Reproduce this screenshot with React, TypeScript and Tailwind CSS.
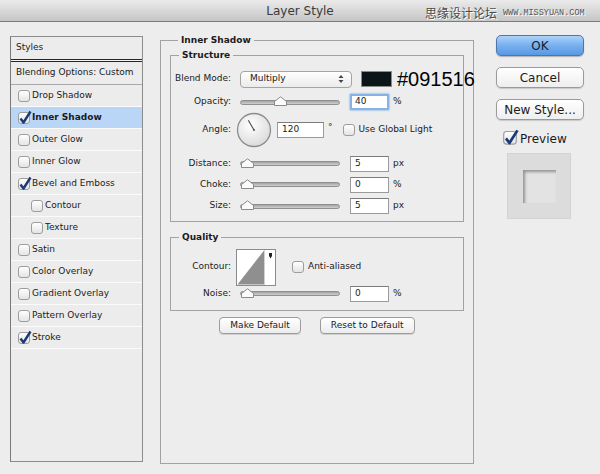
import React from "react";

function Check({ checked = false }: { checked?: boolean }) {
  return (
    <span className="relative inline-block w-[12px] h-[12px] shrink-0 rounded-[3px] border border-[#9d9d9d] bg-linear-to-b from-white to-[#e4e4e4]">
      {checked && (
        <svg
          className="absolute left-[-1px] top-[-3px]"
          width="15"
          height="15"
          viewBox="0 0 15 15"
        >
          <path
            d="M2.5 8.5 L5.5 12.5 L12.5 1.5"
            fill="none"
            stroke="#1d3a78"
            strokeWidth="2.4"
            strokeLinejoin="round"
          />
        </svg>
      )}
    </span>
  );
}

function Slider({ pos }: { pos: number }) {
  return (
    <div className="relative w-[100px] h-[12px] flex items-center shrink-0">
      <div className="w-full h-[5px] rounded-full border border-[#8f8f8f] bg-linear-to-b from-[#a3a3a3] to-[#cfcfcf]" />
      <svg
        className="absolute top-[0px]"
        style={{ left: pos }}
        width="13"
        height="10"
        viewBox="0 0 13 10"
      >
        <path
          d="M0.5 9.5 V5.5 L6.5 0.8 L12.5 5.5 V9.5 Z"
          fill="#fbfbfb"
          stroke="#8a8a8a"
        />
      </svg>
    </div>
  );
}

function NumBox({ value, focus = false, w = "w-[39px]" }: { value: string; focus?: boolean; w?: string }) {
  return (
    <div
      className={
        focus
          ? `${w} h-[16px] shrink-0 bg-white border-2 border-[#86b2e6] shadow-[0_0_2px_#5b95d8] flex items-center pl-[3px] text-[9px]`
          : `${w} h-[16px] shrink-0 bg-white border border-[#9a9a9a] border-t-[#7c7c7c] flex items-center pl-[4px] text-[9px]`
      }
    >
      {value}
    </div>
  );
}

function Label({ children }: { children: React.ReactNode }) {
  return <div className="w-[61px] shrink-0 text-right pr-[1px] text-[9px]">{children}</div>;
}

function SliderRow({ label, pos, value, unit, h = "h-[22px]" }: { label: string; pos: number; value: string; unit: string; h?: string }) {
  return (
    <div className={`flex items-center ${h}`}>
      <Label>{label}</Label>
      <div className="ml-[8px]">
        <Slider pos={pos} />
      </div>
      <div className="ml-[10px]">
        <NumBox value={value} />
      </div>
      <span className="ml-[4px] text-[9px]">{unit}</span>
    </div>
  );
}

function TitleBar() {
  return (
    <div className="relative h-[22px] bg-linear-to-b from-[#ebebeb] to-[#c6c6c6] border-b border-[#7b7b7b] flex items-center justify-center">
      <span className="text-[12px] text-[#3a3a3a] leading-none">Layer Style</span>
      {/* watermark */}
      <div className="absolute left-[425px] top-[7px] flex items-center">
        <span className="font-['Noto_Sans_CJK_SC',sans-serif] text-[12px] leading-none text-[#4a4a4a] [text-shadow:1px_1px_0_#fff]">
          思缘设计论坛
        </span>
        <span className="ml-[6px] font-['Liberation_Mono',monospace] text-[8.5px] leading-none text-[#555] [text-shadow:1px_1px_0_#fff]">
          WWW.MISSYUAN.COM
        </span>
      </div>
    </div>
  );
}

const items: { name: string; checked?: boolean; sub?: boolean; active?: boolean }[] = [
  { name: "Drop Shadow" },
  { name: "Inner Shadow", checked: true, active: true },
  { name: "Outer Glow" },
  { name: "Inner Glow" },
  { name: "Bevel and Emboss", checked: true },
  { name: "Contour", sub: true },
  { name: "Texture", sub: true },
  { name: "Satin" },
  { name: "Color Overlay" },
  { name: "Gradient Overlay" },
  { name: "Pattern Overlay" },
  { name: "Stroke", checked: true },
];

function StyleList() {
  return (
    <div className="w-[133px] h-[426px] shrink-0 border border-[#8c8c8c] border-l-[#7a7a7a] bg-[#ececec] text-[9px]">
      <div className="h-[22px] flex items-center pl-[5px]">Styles</div>
      <div className="h-[3px] border-y border-[#262626] bg-[#f4f4f4]" />
      <div className="h-[23px] flex items-center pl-[5px] border-b border-[#a9a9a9]">
        Blending Options: Custom
      </div>
      {items.map((it) => (
        <div
          key={it.name}
          className={`h-[22px] flex items-center border-b border-[#fbfbfb] ${it.sub ? "pl-[20px]" : "pl-[7px]"} ${it.active ? "bg-[#b9d6f7] font-bold" : ""}`}
        >
          <Check checked={it.checked} />
          <span className="ml-[2px]">{it.name}</span>
        </div>
      ))}
    </div>
  );
}

function Dial() {
  return (
    <svg width="36" height="36" viewBox="0 0 36 36" className="shrink-0">
      <defs>
        <radialGradient id="dialg" cx="40%" cy="35%" r="70%">
          <stop offset="0%" stopColor="#ffffff" />
          <stop offset="100%" stopColor="#d9d9d9" />
        </radialGradient>
      </defs>
      <circle cx="18" cy="18" r="16.5" fill="url(#dialg)" stroke="#8c8c8c" strokeWidth="1.3" />
      <line x1="18" y1="18" x2="12.3" y2="8.2" stroke="#555" strokeWidth="1.2" />
      <circle cx="18" cy="18" r="1" fill="#555" />
    </svg>
  );
}

function ContourThumb() {
  return (
    <svg width="40" height="37" viewBox="0 0 40 37" className="shrink-0">
      <rect x="0.5" y="0.5" width="39" height="36" fill="#fff" stroke="#8c8c8c" />
      <polygon points="1.5,35.5 28,1.5 28,35.5" fill="#8f8f8f" />
      <line x1="28.5" y1="1" x2="28.5" y2="36" stroke="#d2d2d2" />
      <path d="M33 4 H36 V7 L34.5 9.5 L33 7 Z" fill="#222" />
    </svg>
  );
}

function Fieldset({
  legend,
  className,
  children,
}: {
  legend: string;
  className?: string;
  children: React.ReactNode;
}) {
  return (
    <fieldset className={`min-w-0 border border-[#a2a2a2] ${className ?? ""}`}>
      <legend className="ml-[8px] px-[3px] text-[9px] font-bold leading-[14px]">{legend}</legend>
      {children}
    </fieldset>
  );
}

function SmallButton({ children }: { children: React.ReactNode }) {
  return (
    <div className="h-[17px] px-[10px] rounded-[4px] border border-[#9b9b9b] bg-linear-to-b from-white to-[#ececec] shadow-[0_1px_0_#d0d0d0] flex items-center text-[9px]">
      {children}
    </div>
  );
}

function BigButton({ children, primary = false }: { children: React.ReactNode; primary?: boolean }) {
  return (
    <div
      className={
        primary
          ? "w-[88px] h-[21px] rounded-[5px] border border-[#4d74ad] bg-linear-to-b from-[#acd2fa] via-[#78b0ef] to-[#5799e6] flex items-center justify-center text-[12px] shadow-[0_1px_1px_#b0b0b0]"
          : "w-[88px] h-[21px] rounded-[5px] border border-[#9a9a9a] bg-linear-to-b from-white to-[#eeeeee] flex items-center justify-center text-[12px] shadow-[0_1px_1px_#c8c8c8]"
      }
    >
      {children}
    </div>
  );
}

export default function App() {
  return (
    <div className="w-[600px] h-[474px] overflow-hidden bg-[#ededed] text-[#1b1b1b] font-['DejaVu_Sans','Noto_Sans_CJK_SC',sans-serif]">
      <TitleBar />
      <div className="flex items-start pl-[10px]">
        <div className="mt-[14px]">
          <StyleList />
        </div>

        {/* Inner Shadow panel */}
        <Fieldset legend="Inner Shadow" className="ml-[17px] mt-[11px] w-[314px] h-[431px] px-[9px] pt-[1px] shrink-0">
          <Fieldset legend="Structure" className="w-[294px] pb-[4px]">
            {/* Blend mode */}
            <div className="flex items-center h-[22px] mt-[6px]">
              <Label>Blend Mode:</Label>
              <div className="ml-[8px] w-[112px] h-[17px] shrink-0 rounded-[4px] border border-[#a4a4a4] bg-linear-to-b from-white to-[#ebebeb] flex items-center justify-between pl-[9px] pr-[7px] text-[9px]">
                <span>Multiply</span>
                <svg width="6" height="10" viewBox="0 0 6 10">
                  <path d="M0.5 4 L3 1 L5.5 4 Z M0.5 6 L3 9 L5.5 6 Z" fill="#444" />
                </svg>
              </div>
              <div className="ml-[9px] w-[31px] h-[16px] shrink-0 bg-[#091516] border border-[#8a8a8a]" />
              <span className="ml-[5px] shrink-0 whitespace-nowrap font-['Liberation_Sans',sans-serif] text-[20px] leading-none text-black">
                #091516
              </span>
            </div>

            {/* Opacity */}
            <div className="flex items-center h-[22px] mt-[1px]">
              <Label>Opacity:</Label>
              <div className="ml-[8px]">
                <Slider pos={34} />
              </div>
              <div className="ml-[10px]">
                <NumBox value="40" focus />
              </div>
              <span className="ml-[4px] text-[9px]">%</span>
            </div>

            {/* Angle */}
            <div className="flex items-center h-[34px]">
              <Label>Angle:</Label>
              <div className="ml-[4px]">
                <Dial />
              </div>
              <div className="ml-[5px]">
                <NumBox value="120" w="w-[47px]" />
              </div>
              <span className="ml-[4px] self-start mt-[8px] text-[9px]">°</span>
              <div className="ml-[10px] flex items-center">
                <Check />
                <span className="ml-[4px] text-[9px]">Use Global Light</span>
              </div>
            </div>

            <div className="mt-[6px]">
              <SliderRow label="Distance:" pos={1} value="5" unit="px" h="h-[21px]" />
              <SliderRow label="Choke:" pos={1} value="0" unit="%" h="h-[21px]" />
              <SliderRow label="Size:" pos={1} value="5" unit="px" />
            </div>
          </Fieldset>

          <Fieldset legend="Quality" className="w-[294px] mt-[8px] pb-[8px]">
            <div className="flex items-center h-[36px] mt-[5px]">
              <Label>Contour:</Label>
              <div className="ml-[4px]">
                <ContourThumb />
              </div>
              <div className="ml-[16px] flex items-center">
                <Check />
                <span className="ml-[4px] text-[9px]">Anti-aliased</span>
              </div>
            </div>
            <SliderRow label="Noise:" pos={1} value="0" unit="%" h="h-[17px]" />
          </Fieldset>

          <div className="flex justify-center gap-[19px] mt-[6px]">
            <SmallButton>Make Default</SmallButton>
            <SmallButton>Reset to Default</SmallButton>
          </div>
        </Fieldset>

        {/* Right column */}
        <div className="ml-[22px] mt-[13px] flex flex-col">
          <BigButton primary>OK</BigButton>
          <div className="mt-[11px]">
            <BigButton>Cancel</BigButton>
          </div>
          <div className="mt-[11px]">
            <BigButton>New Style...</BigButton>
          </div>
          <div className="mt-[7px] ml-[8px] flex items-center">
            <span className="scale-[1.15]">
              <Check checked />
            </span>
            <span className="ml-[4px] text-[12px]">Preview</span>
          </div>
          <div className="mt-[2px] ml-[11px] w-[64px] h-[66px] bg-[#dcdcdc] border border-[#d3d3d3] flex items-center justify-center">
            <div className="w-[33px] h-[33px] bg-[#e3e3e3] shadow-[inset_2px_2px_3px_rgba(0,0,0,0.35)]" />
          </div>
        </div>
      </div>
    </div>
  );
}
